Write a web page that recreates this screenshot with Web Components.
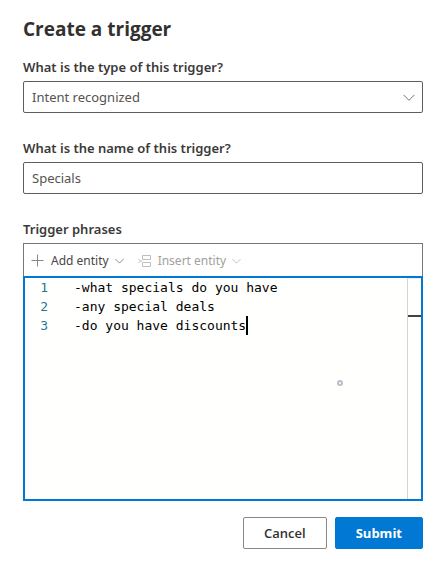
<!DOCTYPE html>
<html lang="en">
<head>
<meta charset="utf-8">
<meta name="viewport" content="width=device-width, initial-scale=1">
<title>Create a trigger</title>
<style>
  body { margin: 0; background: #fff; color: #323130; font: 13px/20px "Noto Sans", "Open Sans", sans-serif; }
</style>
</head>
<body>
<trigger-dialog heading="Create a trigger">
  <select-field label="What is the type of this trigger?" value="Intent recognized"></select-field>
  <text-field label="What is the name of this trigger?" value="Specials"></text-field>
  <phrase-editor label="Trigger phrases">
    <menu-button slot="tools" icon="add">Add entity</menu-button>
    <menu-button slot="tools" icon="insert" disabled>Insert entity</menu-button>
  </phrase-editor>
  <action-button slot="actions">Cancel</action-button>
  <action-button slot="actions" primary>Submit</action-button>
</trigger-dialog>
<script>
const chevron = `<svg class="chevron" viewBox="0 0 12 7" aria-hidden="true"><path d="M.5.8 6 6.3 11.5.8" fill="none" stroke="currentColor"/></svg>`;
const icons = {
  add: `<svg width="14" height="14" viewBox="0 0 14 14" aria-hidden="true"><path d="M.5 6.500h12M6.500.5v12" fill="none" stroke="#8a8886"/></svg>`,
  insert: `<svg width="14" height="14" viewBox="0 0 14 14" aria-hidden="true"><path d="M4.500 1.500h8v4h-8zM4.500 8.500h8v4h-8zM.5 5l2 2-2 2M2.500 7h2" fill="none" stroke="#c0bebc"/></svg>`
};
const fieldStyle = `
  :host { display: block; }
  * { box-sizing: border-box; }
  label { display: block; height: 24px; font-weight: 600; line-height: 20px; color: #3b3a39; }
  input, select { display: block; width: 100%; height: 32px; margin: 0; padding: 0 8px; border: 1px solid #605e5c; border-radius: 2px; background: #fff; color: #555351; font: inherit; appearance: none; outline: none; }
`;

class TriggerDialog extends HTMLElement {
  connectedCallback() {
    this.attachShadow({ mode: 'open' }).innerHTML = `
      <style>
        :host { display: block; padding: 16px 23px; }
        h1 { margin: 0 0 15px; font: 700 19px/26px "Open Sans", "Noto Sans", sans-serif; }
        .fields { display: grid; gap: 25px; }
        footer { display: flex; justify-content: flex-end; gap: 8px; margin-top: 16px; }
      </style>
      <h1>${this.getAttribute('heading')}</h1>
      <div class="fields"><slot></slot></div>
      <footer><slot name="actions"></slot></footer>`;
  }
}

class SelectField extends HTMLElement {
  connectedCallback() {
    this.attachShadow({ mode: 'open' }).innerHTML = `
      <style>${fieldStyle}
        .control { display: grid; align-items: center; }
        .control > * { grid-area: 1 / 1; }
        .chevron { width: 12px; height: 7px; justify-self: end; margin-right: 8px; color: #797775; pointer-events: none; }
      </style>
      <label for="choice">${this.getAttribute('label')}</label>
      <div class="control">
        <select id="choice"><option>${this.getAttribute('value')}</option></select>
        ${chevron}
      </div>`;
  }
}

class TextField extends HTMLElement {
  connectedCallback() {
    this.attachShadow({ mode: 'open' }).innerHTML = `
      <style>${fieldStyle}</style>
      <label for="text">${this.getAttribute('label')}</label>
      <input id="text" type="text" value="${this.getAttribute('value')}">`;
  }
}

class MenuButton extends HTMLElement {
  connectedCallback() {
    this.attachShadow({ mode: 'open' }).innerHTML = `
      <style>
        :host { display: block; }
        button { display: flex; align-items: center; gap: 6px; height: 32px; margin: 0; padding: 0; border: 0; background: none; color: #484644; font: inherit; font-size: 12px; }
        button:disabled { color: #a19f9d; }
        .chevron { width: 9px; height: 6px; opacity: .8; }
      </style>
      <button type="button" ${this.hasAttribute('disabled') ? 'disabled' : ''}>
        ${icons[this.getAttribute('icon')]}<span><slot></slot></span>${chevron}
      </button>`;
  }
}

class PhraseEditor extends HTMLElement {
  connectedCallback() {
    this.attachShadow({ mode: 'open' }).innerHTML = `
      <style>${fieldStyle}
        .toolbar { display: flex; gap: 14px; height: 33px; padding: 1px 7px 0; border: 1px solid #797775; border-bottom: 0; }
        .editor { display: grid; grid-template-columns: 49px 1fr 14px; min-height: 225px; border: 2px solid #0078d4; background: #fffffe; font: 13px/19px "DejaVu Sans Mono", "Liberation Mono", monospace; }
        .numbers { padding-right: 26px; text-align: right; color: #237893; }
        .text { position: relative; display: grid; }
        textarea { width: 100%; height: 100%; margin: 0; padding: 0; border: 0; outline: none; resize: none; overflow: hidden; background: none; color: #000; font: inherit; white-space: pre; }
        .caret { position: absolute; left: 22ch; top: 38px; width: 2px; height: 19px; background: #000; }
        .pointer { position: absolute; left: 263px; top: 102px; width: 6px; height: 6px; border: 2px solid #bdbdca; border-radius: 50%; }
        .ruler { position: relative; border-left: 1px solid #d3d3d3; border-top: 1px solid #ececec; }
        .mark { position: absolute; left: 0; right: 0; top: 36px; height: 2px; background: #424242; }
      </style>
      <label for="phrases">${this.getAttribute('label')}</label>
      <div class="toolbar"><slot name="tools"></slot></div>
      <div class="editor">
        <div class="numbers"><div>1</div><div>2</div><div>3</div></div>
        <div class="text">
          <textarea id="phrases" spellcheck="false">-what specials do you have
-any special deals
-do you have discounts</textarea>
          <i class="caret"></i><i class="pointer"></i>
        </div>
        <div class="ruler"><i class="mark"></i></div>
      </div>`;
  }
}

class ActionButton extends HTMLElement {
  connectedCallback() {
    this.attachShadow({ mode: 'open' }).innerHTML = `
      <style>
        :host { display: block; }
        button { height: 32px; margin: 0; padding: 0 20px; border: 1px solid #8a8886; border-radius: 2px; background: #fff; color: #323130; font: 600 13px/20px "Open Sans", "Noto Sans", sans-serif; }
        :host([primary]) button { border-color: #0078d4; background: #0078d4; color: #fff; font-weight: 700; }
      </style>
      <button type="button"><slot></slot></button>`;
  }
}

customElements.define('menu-button', MenuButton);
customElements.define('action-button', ActionButton);
customElements.define('select-field', SelectField);
customElements.define('text-field', TextField);
customElements.define('phrase-editor', PhraseEditor);
customElements.define('trigger-dialog', TriggerDialog);
</script>
</body>
</html>
